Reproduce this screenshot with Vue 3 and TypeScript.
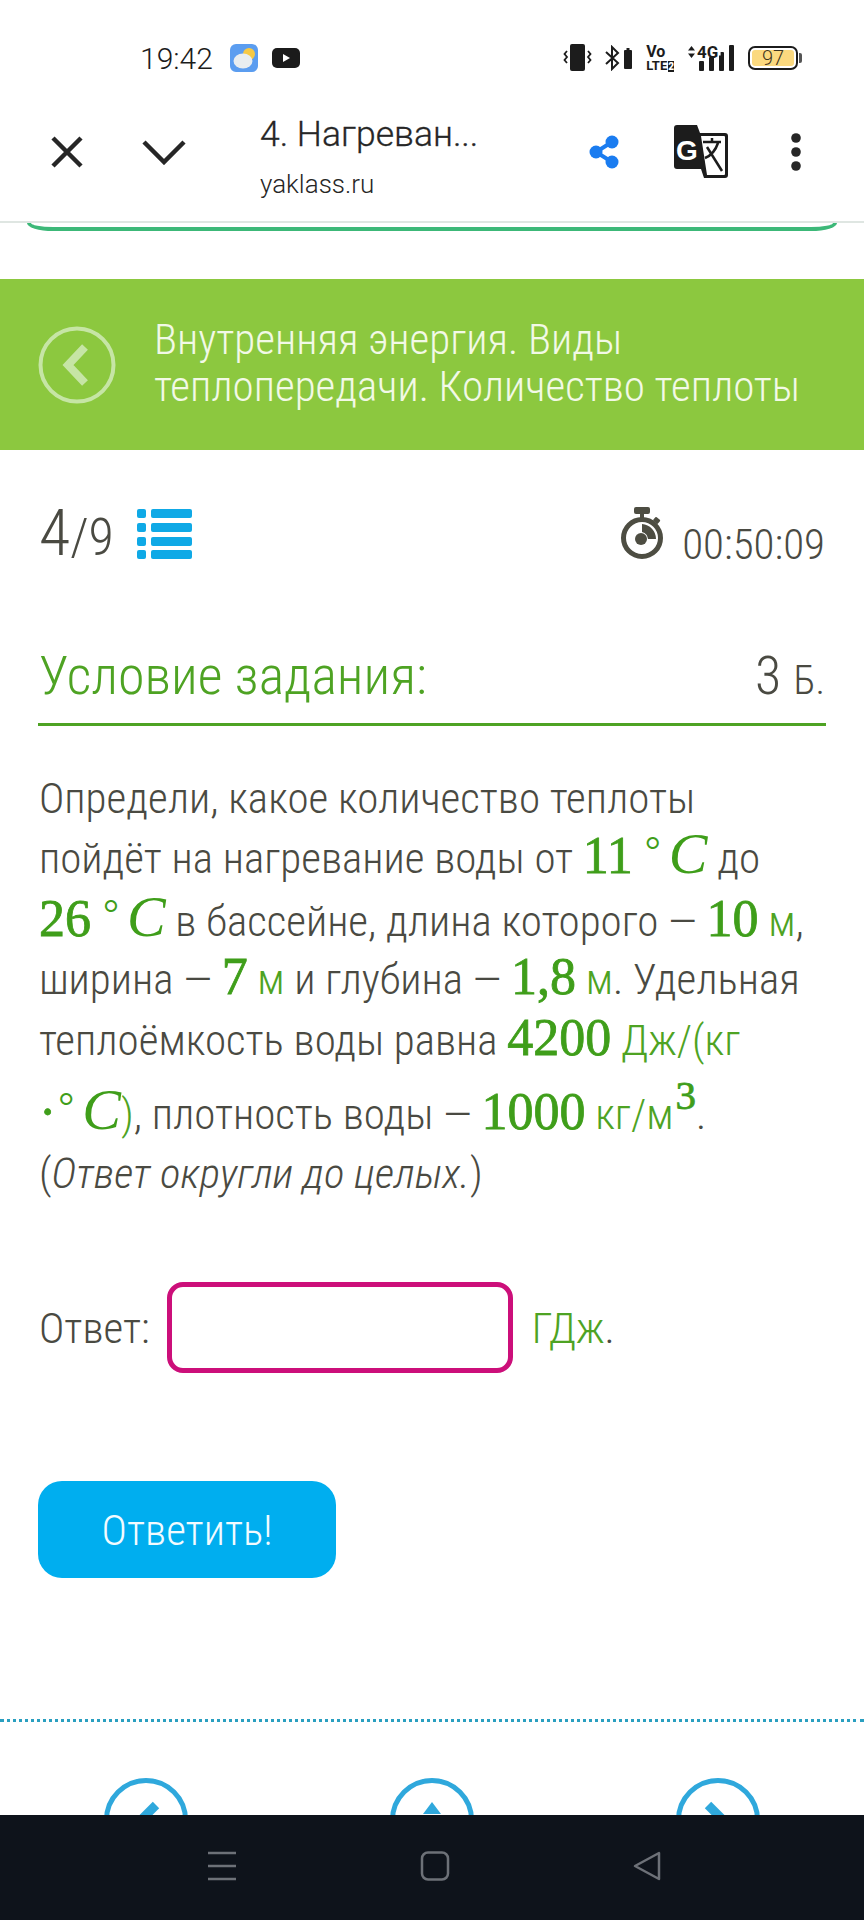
<script setup lang="ts">
const navCircles = ["left", "up", "right"];
</script>

<template>
  <div class="phone">
    <div class="status">
      <span class="status__time">19:42</span>
      <svg class="status__weather" width="28" height="28" viewBox="0 0 28 28">
        <rect width="28" height="28" rx="6" fill="#5b9df0" />
        <circle cx="19" cy="10" r="6" fill="#f6c945" />
        <ellipse cx="13" cy="17" rx="9.500" ry="7.500" fill="#e8edf0" />
      </svg>
      <svg class="status__yt" width="28" height="20" viewBox="0 0 28 20">
        <rect width="28" height="20" rx="5" fill="#1b1b1b" />
        <path d="M11 6l7 4-7 4z" fill="#fff" />
      </svg>
      <div class="status__right">
        <svg width="29" height="28" viewBox="0 0 29 28">
          <rect x="7" y="0" width="15" height="27" rx="2" fill="#1c1c1c" />
          <path d="M4 7L1.500 10 4 13l-2.500 3L4 19M25 7l2.500 3-2.500 3 2.500 3-2.500 3" fill="none" stroke="#1c1c1c" stroke-width="1.800" />
        </svg>
        <svg width="28" height="26" viewBox="0 0 28 26">
          <path d="M1 7l12 11-6 6V2l6 6L1 19" fill="none" stroke="#1c1c1c" stroke-width="2" />
          <rect x="19" y="5" width="8" height="19" rx="1" fill="#1c1c1c" />
          <rect x="21.500" y="3" width="3" height="2" fill="#1c1c1c" />
        </svg>
        <div class="volte">
          <span class="volte__vo">Vo</span>
          <span class="volte__lte">LTE<b>2</b></span>
        </div>
        <div class="signal">
          <svg width="9" height="14" viewBox="0 0 9 14"><path d="M4.500 1L8 5.500H1zM4.500 13L1 8.500h7z" fill="#1c1c1c" /></svg>
          <span class="signal__g">4G</span>
          <svg class="signal__bars" width="36" height="26" viewBox="0 0 36 26">
            <rect x="0" y="16" width="5" height="10" rx="1" fill="#1c1c1c" />
            <rect x="10" y="12" width="5" height="14" rx="1" fill="#1c1c1c" />
            <rect x="20" y="7" width="5" height="19" rx="1" fill="#1c1c1c" />
            <rect x="30" y="0" width="5" height="26" rx="1" fill="#1c1c1c" />
          </svg>
        </div>
        <div class="battery">
          <div class="battery__body"><span>97</span></div>
          <div class="battery__cap" />
        </div>
      </div>
    </div>

    <div class="toolbar">
      <svg class="toolbar__close" width="34" height="32" viewBox="0 0 34 32">
        <path d="M3 2l28 28M31 2L3 30" fill="none" stroke="#262626" stroke-width="4.500" />
      </svg>
      <svg class="toolbar__chevron" width="44" height="26" viewBox="0 0 44 26">
        <path d="M2 3l20 20L42 3" fill="none" stroke="#262626" stroke-width="4.500" />
      </svg>
      <div class="toolbar__title">
        <div class="toolbar__name">4. Нагреван...</div>
        <div class="toolbar__host">yaklass.ru</div>
      </div>
      <svg class="toolbar__share" width="30" height="34" viewBox="0 0 30 34">
        <path d="M23 7L7 17l16 10" fill="none" stroke="#1a7cf0" stroke-width="4" />
        <circle cx="23" cy="7" r="6.500" fill="#1a7cf0" />
        <circle cx="7" cy="17" r="6.500" fill="#1a7cf0" />
        <circle cx="23" cy="27" r="6.500" fill="#1a7cf0" />
      </svg>
      <svg class="toolbar__translate" width="54" height="53" viewBox="0 0 54 53">
        <path d="M3 0h20l3 8h25a3 3 0 013 3v39a3 3 0 01-3 3H30l-3-9H3a3 3 0 01-3-3V3a3 3 0 013-3z" fill="#1c1c1c" />
        <path d="M27 11h23a1 1 0 011 1v37a1 1 0 01-1 1H33l-6-39z" fill="#fff" />
        <text x="2" y="35" class="toolbar__g">G</text>
        <path d="M29 17h18M38 13v4M44 18c-3 9-8 13-13 15M33 22l15 24" fill="none" stroke="#1c1c1c" stroke-width="2.500" />
      </svg>
      <svg class="toolbar__dots" width="10" height="38" viewBox="0 0 10 38">
        <circle cx="5" cy="5" r="4.800" fill="#262626" />
        <circle cx="5" cy="19" r="4.800" fill="#262626" />
        <circle cx="5" cy="33" r="4.800" fill="#262626" />
      </svg>
    </div>

    <div class="prev-card" />

    <div class="banner">
      <svg class="banner__back" width="78" height="78" viewBox="0 0 78 78">
        <circle cx="39" cy="39" r="36.500" fill="none" stroke="#c6e5a5" stroke-width="4" />
        <path d="M47 21L30 39l17 18" fill="none" stroke="#c6e5a5" stroke-width="8" />
      </svg>
      <div class="banner__text">Внутренняя энергия. Виды<br />теплопередачи. Количество теплоты</div>
    </div>

    <div class="meta">
      <div class="meta__left">
        <span class="meta__num">4</span><span class="meta__total">/9</span>
        <svg class="meta__list" width="56" height="51" viewBox="0 0 56 51">
          <g fill="#0fa9e6">
            <rect x="0" y="0" width="9" height="9" rx="2" />
            <rect x="14" y="0" width="41" height="9" rx="2" />
            <rect x="0" y="14" width="9" height="9" rx="2" />
            <rect x="14" y="14" width="41" height="9" rx="2" />
            <rect x="0" y="28" width="9" height="9" rx="2" />
            <rect x="14" y="28" width="41" height="9" rx="2" />
            <rect x="0" y="41" width="9" height="9" rx="2" />
            <rect x="14" y="41" width="41" height="9" rx="2" />
          </g>
        </svg>
      </div>
      <div class="meta__right">
        <svg class="meta__watch" width="44" height="53" viewBox="0 0 44 53">
          <g fill="#4d4d42">
            <rect x="14" y="0" width="16" height="7" rx="2" />
            <rect x="20" y="6" width="4" height="6" />
            <rect x="34" y="11" width="6" height="5" rx="1" transform="rotate(40 37 13)" />
            <circle cx="21" cy="32" r="6" />
            <path d="M22 17a15 15 0 0114 15h-8a8 8 0 00-6-7z" />
          </g>
          <circle cx="22" cy="31" r="18.500" fill="none" stroke="#4d4d42" stroke-width="5" />
        </svg>
        <span class="meta__time">00:50:09</span>
      </div>
    </div>

    <div class="task-head">
      <span class="task-head__title">Условие задания:</span>
      <span class="task-head__score">3 <small>Б.</small></span>
    </div>

    <div class="task">
      <div class="task__line l1">Определи, какое количество теплоты</div>
      <div class="task__line l2">пойдёт на нагревание воды от <span class="num">11</span><span class="deg">°</span><span class="var">C</span> до</div>
      <div class="task__line l3"><span class="num">26</span><span class="deg">°</span><span class="var">C</span> в бассейне, длина которого — <span class="num">10</span> <span class="unit">м</span>,</div>
      <div class="task__line l4">ширина — <span class="num">7</span> <span class="unit">м</span> и глубина — <span class="num">1,8</span> <span class="unit">м</span>. Удельная</div>
      <div class="task__line l5">теплоёмкость воды равна <span class="num">4200</span> <span class="unit">Дж/(кг</span></div>
      <div class="task__line l6"><span class="num">·</span><span class="deg deg--tight">°</span><span class="var">C</span><span class="unit">)</span>, плотность воды — <span class="num">1000</span> <span class="unit">кг/м</span><span class="num sup">3</span>.</div>
      <div class="task__line l7">(<i>Ответ округли до целых.</i>)</div>
    </div>

    <div class="answer">
      <span class="answer__label">Ответ:</span>
      <div class="answer__input" />
      <span class="answer__unit">ГДж</span><span class="answer__dot">.</span>
    </div>

    <button class="submit">Ответить!</button>

    <div class="divider" />

    <div class="pager">
      <svg v-for="dir in navCircles" :key="dir" width="84" height="84" viewBox="0 0 84 84">
        <circle cx="42" cy="42" r="39.500" fill="none" stroke="#2fa8dc" stroke-width="5" />
        <path v-if="dir === 'left'" d="M52 27L32 47" fill="none" stroke="#2fa8dc" stroke-width="9" />
        <path v-else-if="dir === 'up'" d="M33 36l9-12 9 12z" fill="#2fa8dc" />
        <path v-else d="M32 27l20 20" fill="none" stroke="#2fa8dc" stroke-width="9" />
      </svg>
    </div>

    <div class="navbar">
      <svg width="30" height="30" viewBox="0 0 30 30">
        <path d="M1 2h28M1 15h28M1 28h28" stroke="#6d7178" stroke-width="2.500" />
      </svg>
      <svg width="30" height="30" viewBox="0 0 30 30">
        <rect x="2" y="1.500" width="26" height="27" rx="6" fill="none" stroke="#6d7178" stroke-width="2.500" />
      </svg>
      <svg width="30" height="30" viewBox="0 0 30 30">
        <path d="M27 2v26L3 15z" fill="none" stroke="#6d7178" stroke-width="2.500" stroke-linejoin="round" />
      </svg>
    </div>
  </div>
</template>

<style>
html,
body {
  margin: 0;
  background: #fff;
}
</style>

<style scoped>
.phone {
  position: relative;
  width: 864px;
  height: 1920px;
  overflow: hidden;
  background: #fff;
  font-family: Roboto, "Liberation Sans", sans-serif;
  font-weight: 300;
  color: #4a4a42;
}

/* status bar */
.status {
  display: flex;
  align-items: center;
  height: 76px;
  padding: 20px 62px 0 140px;
  color: #1c1c1c;
}
.status__time {
  font-size: 30px;
  font-weight: 300;
  width: 90px;
}
.status__yt {
  margin-left: 14px;
}
.status__right {
  display: flex;
  align-items: center;
  margin-left: auto;
  gap: 13px;
}
.volte {
  display: flex;
  flex-direction: column;
  font-weight: 700;
  font-size: 13px;
  line-height: 13px;
}
.volte__vo {
  font-size: 16px;
  line-height: 15px;
}
.volte__lte b {
  background: #1c1c1c;
  color: #fff;
  font-size: 10px;
  margin-left: 1px;
}
.signal {
  display: flex;
  align-items: flex-start;
  position: relative;
  width: 48px;
  height: 26px;
}
.signal__g {
  font-size: 17px;
  font-weight: 700;
  line-height: 15px;
  margin-left: 1px;
}
.signal__bars {
  position: absolute;
  right: 0;
  top: 0;
  clip-path: polygon(0 40%, 60% 40%, 60% 0, 100% 0, 100% 100%, 0 100%);
}
.battery {
  display: flex;
  align-items: center;
  gap: 1px;
}
.battery__body {
  width: 50px;
  height: 24px;
  box-sizing: border-box;
  border: 2px solid #1c1c1c;
  border-radius: 7px;
  padding: 2px;
}
.battery__body span {
  display: block;
  height: 100%;
  background: #fbd97f;
  border-radius: 3px;
  font-size: 20px;
  line-height: 16px;
  text-align: center;
  font-weight: 300;
  color: #3b3320;
}
.battery__cap {
  width: 3px;
  height: 10px;
  background: #555;
  border-radius: 0 2px 2px 0;
}

/* browser toolbar */
.toolbar {
  display: flex;
  align-items: center;
  height: 111px;
  padding: 0 0 14px 50px;
  border-bottom: 2px solid #dfe6e2;
}
.toolbar__chevron {
  margin-left: 58px;
}
.toolbar__title {
  width: 329px;
  margin: 10px 0 0 74px;
  color: #262626;
}
.toolbar__name {
  font-size: 35.500px;
  font-weight: 300;
  line-height: 40px;
  -webkit-text-stroke: 0.3px #262626;
}
.toolbar__host {
  font-size: 26px;
  font-weight: 300;
  line-height: 32px;
  margin-top: 14px;
}
.toolbar__translate {
  margin-left: 55px;
}
.toolbar__dots {
  margin-left: 63px;
}
.toolbar__g {
  font-family: "Liberation Sans", sans-serif;
  font-weight: 700;
  font-size: 28px;
  fill: #fff;
}

.prev-card {
  height: 4px;
  margin: 0 27px;
  border: 4px solid #3cb878;
  border-top: 0;
  border-radius: 0 0 26px 26px / 0 0 8px 8px;
}

/* section banner */
.banner {
  display: flex;
  align-items: center;
  height: 171px;
  margin-top: 48px;
  padding-left: 38px;
  background: #8cc83f;
  font-stretch: 75%;
}
.banner__text {
  margin-left: 38px;
  color: #f2f9e6;
  font-size: 43px;
  line-height: 47px;
  padding-bottom: 3px;
}

/* progress and timer */
.meta {
  display: flex;
  justify-content: space-between;
  align-items: flex-end;
  height: 60px;
  margin-top: 58px;
  padding: 0 39px 0 39px;
  font-stretch: 75%;
}
.meta__left {
  display: flex;
  align-items: baseline;
}
.meta__num {
  font-size: 64px;
  line-height: 60px;
}
.meta__total {
  font-size: 52px;
  line-height: 60px;
}
.meta__list {
  align-self: flex-end;
  margin: 0 0 8px 23px;
}
.meta__right {
  display: flex;
  align-items: flex-end;
}
.meta__watch {
  margin-bottom: 8px;
}
.meta__time {
  margin-left: 18px;
  font-size: 43px;
  line-height: 48px;
}

/* task heading */
.task-head {
  display: flex;
  justify-content: space-between;
  align-items: baseline;
  height: 82px;
  margin: 73px 38px 0;
  padding: 0 1px 0 1px;
  border-bottom: 3px solid #4ea323;
  font-stretch: 75%;
}
.task-head__title {
  color: #4ea323;
  font-size: 54px;
  line-height: 70px;
}
.task-head__score {
  font-size: 54px;
  line-height: 70px;
}
.task-head__score small {
  font-size: 40px;
}

/* task body */
.task {
  margin-top: 42px;
  padding-left: 39px;
  font-size: 43px;
  font-stretch: 75%;
}
.task__line {
  height: 60px;
  line-height: 60px;
  white-space: nowrap;
}
.l3 { margin-top: 3px; }
.l4 { margin-top: -2px; }
.l5 { margin-top: 1px; }
.l6 { margin-top: 14px; }
.l7 { margin-top: -1px; }
.num,
.deg,
.var {
  color: #3f9e1a;
  font-family: "Liberation Serif", serif;
  line-height: 0;
}
.num {
  font-size: 52px;
  font-weight: 400;
  -webkit-text-stroke: 0.8px #3f9e1a;
}
.deg {
  font-size: 40px;
  position: relative;
  top: -9px;
  margin-left: 12px;
}
.deg--tight {
  margin-left: 2px;
}
.var {
  font-style: italic;
  font-size: 58px;
  margin-left: 8px;
}
.unit {
  color: #4ea323;
}
.sup {
  font-size: 41px;
  position: relative;
  top: -20px;
  margin-left: 2px;
}

/* answer row */
.answer {
  display: flex;
  align-items: center;
  margin: 79px 0 0 39px;
  font-size: 43px;
  font-stretch: 75%;
}
.answer__input {
  width: 346px;
  height: 91px;
  box-sizing: border-box;
  margin: 0 19px 0 17px;
  border: 5px solid #cc0f7a;
  border-radius: 16px;
}
.answer__unit {
  color: #4ea323;
}

.submit {
  display: block;
  width: 298px;
  height: 97px;
  margin: 108px 0 0 38px;
  border: 0;
  border-radius: 24px;
  background: #00aeef;
  color: #f2fbff;
  font-family: inherit;
  font-weight: 300;
  font-stretch: 75%;
  font-size: 43px;
}

.divider {
  margin-top: 141px;
  border-top: 3px dotted #2a9fc0;
}

.pager {
  display: flex;
  justify-content: space-between;
  padding: 56px 104px 0;
}

/* system navigation */
.navbar {
  position: absolute;
  left: 0;
  right: 0;
  bottom: 0;
  height: 105px;
  display: flex;
  align-items: flex-start;
  padding: 36px 202px 0 207px;
  box-sizing: border-box;
  justify-content: space-between;
  background: #0e131b;
}
</style>
